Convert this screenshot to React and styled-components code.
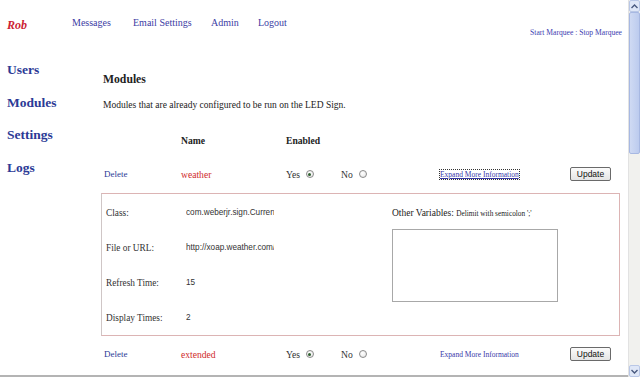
import styled, { createGlobalStyle } from "styled-components";

const GlobalStyle = createGlobalStyle`
  html, body {
    margin: 0;
    padding: 0;
    background: #ffffff;
    overflow: hidden;
  }
  body {
    font-family: "Liberation Serif", "Times New Roman", serif;
    color: #222;
  }
`;

const modules = [
  { name: "weather", enabled: true, focused: true, gap: 14 },
  { name: "extended", enabled: true, focused: false, gap: 8 },
];

const details = [
  { label: "Class:", value: "com.weberjr.sign.CurrentWeather" },
  { label: "File or URL:", value: "http://xoap.weather.com/weather/local" },
  { label: "Refresh Time:", value: "15" },
  { label: "Display Times:", value: "2" },
];

const Radio = ({ checked }) => (
  <RadioCircle>{checked && <RadioDot />}</RadioCircle>
);

const ModuleRow = ({ module }) => (
  <Row $gap={module.gap}>
    <DeleteLink>Delete</DeleteLink>
    <ModuleName>{module.name}</ModuleName>
    <Choice>
      Yes <Radio checked={module.enabled} />
    </Choice>
    <Choice>
      No <Radio checked={!module.enabled} />
    </Choice>
    <ExpandLink $focused={module.focused}>Expand More Information</ExpandLink>
    <UpdateButton>Update</UpdateButton>
  </Row>
);

const App = () => {
  return (
    <>
      <GlobalStyle />
      <Window>
        <Page>
          <Header>
            <Brand>Rob</Brand>
            <Nav>
              <NavLink>Messages</NavLink>
              <NavLink>Email Settings</NavLink>
              <NavLink>Admin</NavLink>
              <NavLink>Logout</NavLink>
            </Nav>
            <Marquee>Start Marquee : Stop Marquee</Marquee>
          </Header>

          <Body>
            <Sidebar>
              <SideLink>Users</SideLink>
              <SideLink>Modules</SideLink>
              <SideLink>Settings</SideLink>
              <SideLink>Logs</SideLink>
            </Sidebar>

            <Main>
              <Heading>Modules</Heading>
              <Description>Modules that are already configured to be run on the LED Sign.</Description>

              <HeaderRow>
                <span />
                <ColumnTitle>Name</ColumnTitle>
                <ColumnTitle>Enabled</ColumnTitle>
              </HeaderRow>

              <ModuleRow module={modules[0]} />

              <DetailBox>
                <DetailList>
                  {details.map((d) => (
                    <DetailRow key={d.label}>
                      <DetailLabel>{d.label}</DetailLabel>
                      <DetailInput readOnly value={d.value} />
                    </DetailRow>
                  ))}
                </DetailList>
                <OtherVars>
                  <OtherLabel>
                    Other Variables: <small>Delimit with semicolon ';'</small>
                  </OtherLabel>
                  <VarsArea readOnly />
                </OtherVars>
              </DetailBox>

              <ModuleRow module={modules[1]} />
            </Main>
          </Body>
        </Page>

        <Scrollbar>
          <ScrollButton>
            <svg width="7" height="5" viewBox="0 0 7 5">
              <path d="M0.5 4 L3.5 1 L6.5 4" fill="none" stroke="#4a5a80" strokeWidth="1.4" />
            </svg>
          </ScrollButton>
          <Thumb />
          <Track />
          <ScrollButton>
            <svg width="7" height="5" viewBox="0 0 7 5">
              <path d="M0.5 1 L3.5 4 L6.5 1" fill="none" stroke="#4a5a80" strokeWidth="1.4" />
            </svg>
          </ScrollButton>
        </Scrollbar>
      </Window>
    </>
  );
};

export default App;

const Window = styled.div`
  display: flex;
  width: 640px;
  height: 377px;
  overflow: hidden;
`;

const Page = styled.div`
  flex: 1;
  display: flex;
  flex-direction: column;
  border-bottom: 2px solid #b4b4b4;
  box-sizing: border-box;
`;

const Header = styled.div`
  display: flex;
  align-items: flex-start;
  height: 54px;
  padding: 17px 6px 0 7px;
  box-sizing: border-box;
`;

const Brand = styled.div`
  width: 65px;
  font-size: 12px;
  font-weight: bold;
  font-style: italic;
  color: #cc2233;
  line-height: 14px;
  margin-top: 1px;
`;

const Nav = styled.div`
  display: grid;
  grid-template-columns: 61px 78px 47px auto;
  font-size: 10px;
  line-height: 12px;
`;

const NavLink = styled.span`
  color: #3c3ca4;
`;

const Marquee = styled.div`
  margin-left: auto;
  margin-top: 11px;
  font-size: 7.6px;
  color: #3c3cb0;
`;

const Body = styled.div`
  display: flex;
  flex: 1;
`;

const Sidebar = styled.div`
  width: 101px;
  padding-left: 7px;
  box-sizing: border-box;
  display: flex;
  flex-direction: column;
`;

const SideLink = styled.div`
  font-size: 13.5px;
  font-weight: bold;
  color: #2c3a96;
  line-height: 32.7px;
`;

const Main = styled.div`
  flex: 1;
  display: flex;
  flex-direction: column;
  padding-right: 8px;
`;

const Heading = styled.div`
  margin-top: 19px;
  padding-left: 2px;
  font-size: 11.7px;
  font-weight: bold;
  line-height: 14px;
`;

const Description = styled.div`
  margin-top: 12px;
  padding-left: 2px;
  font-size: 9.5px;
  line-height: 12px;
`;

const rowGrid = `
  display: grid;
  grid-template-columns: 77px 105px 55px 99px 130px auto;
  align-items: center;
  padding-left: 3px;
  height: 20px;
`;

const HeaderRow = styled.div`
  ${rowGrid}
  margin-top: 19px;
`;

const ColumnTitle = styled.span`
  font-size: 9.6px;
  font-weight: bold;
`;

const Row = styled.div`
  ${rowGrid}
  margin-top: ${(p) => p.$gap}px;
  margin-bottom: 9px;
  font-size: 9.6px;
`;

const DeleteLink = styled.span`
  color: #2c3a96;
  font-size: 9px;
`;

const ModuleName = styled.span`
  color: #d02c2c;
`;

const Choice = styled.span`
  display: flex;
  align-items: center;
  gap: 6px;
  color: #333;
`;

const RadioCircle = styled.span`
  width: 8px;
  height: 8px;
  border-radius: 50%;
  border: 1px solid #8a8a8a;
  background: radial-gradient(circle at 40% 35%, #ffffff, #e4e4e4);
  box-sizing: border-box;
  display: inline-flex;
  align-items: center;
  justify-content: center;
`;

const RadioDot = styled.span`
  width: 3px;
  height: 3px;
  border-radius: 50%;
  background: #2f5f2f;
`;

const ExpandLink = styled.span`
  justify-self: start;
  font-size: 7.5px;
  color: #3838a8;
  text-decoration: ${(p) => (p.$focused ? "underline" : "none")};
  outline: ${(p) => (p.$focused ? "1px dotted #333" : "none")};
`;

const UpdateButton = styled.button`
  width: 41px;
  height: 14px;
  padding: 0;
  font-family: "Liberation Sans", Arial, sans-serif;
  font-size: 8.5px;
  color: #111;
  border: 1px solid #6a6a6a;
  border-radius: 2px;
  background: linear-gradient(#fbfbfb, #e4e4e4);
`;

const DetailBox = styled.div`
  display: flex;
  height: 143px;
  flex-shrink: 0;
  box-sizing: border-box;
  border: 1px solid #dcb4b4;
  border-left-color: #cfc6c6;
`;

const DetailList = styled.div`
  width: 290px;
  padding: 1px 0 0 4px;
  box-sizing: border-box;
  display: flex;
  flex-direction: column;
`;

const DetailRow = styled.div`
  display: flex;
  align-items: center;
  height: 35px;
`;

const DetailLabel = styled.span`
  width: 80px;
  font-size: 9.3px;
  color: #333;
`;

const DetailInput = styled.input`
  width: 88px;
  padding: 0;
  border: none;
  outline: none;
  background: transparent;
  font-family: "Liberation Sans", Arial, sans-serif;
  font-size: 8.2px;
  color: #333;
`;

const OtherVars = styled.div`
  display: flex;
  flex-direction: column;
  padding-top: 14px;
`;

const OtherLabel = styled.div`
  font-size: 9.5px;
  line-height: 10px;
  color: #222;

  small {
    font-size: 7.3px;
  }
`;

const VarsArea = styled.textarea`
  margin-top: 10px;
  width: 166px;
  height: 73px;
  box-sizing: border-box;
  border: 1px solid #a8a8a8;
  resize: none;
  outline: none;
  padding: 0;
`;

const Scrollbar = styled.div`
  width: 12px;
  display: flex;
  flex-direction: column;
  background: #f1f1ee;
  border-left: 1px solid #e2e2e2;
  box-sizing: border-box;
`;

const ScrollButton = styled.div`
  height: 10px;
  display: flex;
  align-items: center;
  justify-content: center;
  background: #dfe7f7;
  border: 1px solid #b9c7e6;
  border-radius: 2px;
`;

const Thumb = styled.div`
  height: 142px;
  background: linear-gradient(90deg, #cfdaf3, #bccbee);
  border: 1px solid #a7b8e2;
  border-radius: 2px;
  box-sizing: border-box;
`;

const Track = styled.div`
  flex: 1;
`;
